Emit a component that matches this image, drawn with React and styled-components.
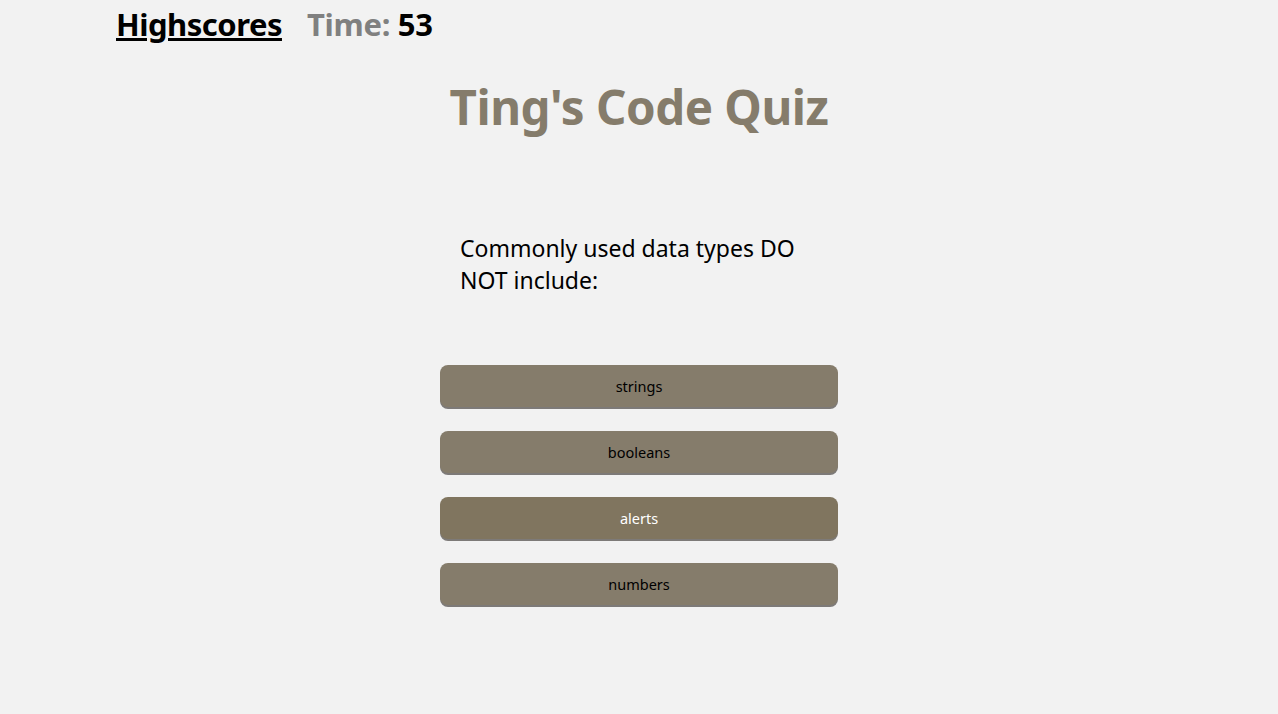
import React from 'react';
import styled, { createGlobalStyle } from 'styled-components';

const GlobalStyle = createGlobalStyle`
  html, body {
    margin: 0;
    padding: 0;
    background: #f2f2f2;
    font-family: "Noto Sans", "Open Sans", sans-serif;
  }
`;

const Page = styled.div`
  min-height: 714px;
  background: #f2f2f2;
`;

const TopBar = styled.header`
  display: flex;
  align-items: baseline;
  gap: 25px;
  padding: 3px 0 0 116px;
  height: 46px;
  box-sizing: border-box;
`;

const ScoresLink = styled.a`
  font-size: 31px;
  font-weight: 700;
  color: #000;
  text-decoration: underline;
  letter-spacing: -0.5px;
`;

const Timer = styled.div`
  font-size: 31px;
  font-weight: 700;
  color: #808080;
  letter-spacing: -0.3px;

  span {
    color: #000;
  }
`;

const Title = styled.h1`
  margin: 28px 0 0;
  text-align: center;
  font-size: 47.5px;
  font-weight: 700;
  color: #857c6b;
  letter-spacing: -0.5px;
`;

const QuizCard = styled.section`
  width: 400px;
  margin: 93px auto 0;
  display: flex;
  flex-direction: column;
`;

const Question = styled.p`
  margin: 0;
  padding: 0 20px 0 21px;
  font-size: 23px;
  line-height: 32px;
  color: #000;
`;

const Choices = styled.div`
  display: flex;
  flex-direction: column;
  gap: 24px;
  margin-top: 69px;
  padding: 0 1px;
`;

const Choice = styled.button`
  height: 42px;
  border: none;
  border-radius: 8px;
  background: ${props => (props.active ? '#80755f' : '#857c6b')};
  color: ${props => (props.active ? '#fff' : '#000')};
  box-shadow: 0 2px 0 #7d7a78;
  font-family: inherit;
  font-size: 14.5px;
  cursor: pointer;
`;

const answers = ['strings', 'booleans', 'alerts', 'numbers'];

export default function App() {
  return (
    <Page>
      <GlobalStyle />
      <TopBar>
        <ScoresLink href="#">Highscores</ScoresLink>
        <Timer>
          Time: <span>53</span>
        </Timer>
      </TopBar>
      <Title>Ting's Code Quiz</Title>
      <QuizCard>
        <Question>Commonly used data types DO NOT include:</Question>
        <Choices>
          {answers.map(a => (
            <Choice key={a} active={a === 'alerts'}>
              {a}
            </Choice>
          ))}
        </Choices>
      </QuizCard>
    </Page>
  );
}
